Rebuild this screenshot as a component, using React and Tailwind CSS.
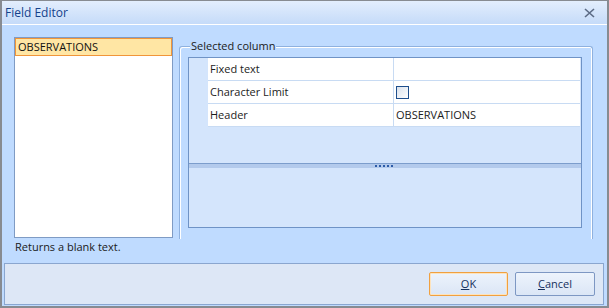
import React from 'react'

const rows = [
  { name: 'Fixed text', value: '' },
  { name: 'Character Limit', value: 'checkbox' },
  { name: 'Header', value: 'OBSERVATIONS' },
]

function CloseIcon() {
  return (
    <svg width="11" height="10" viewBox="0 0 11 10" className="text-[#5c6b85]">
      <path d="M1 1l9 8M10 1l-9 8" stroke="currentColor" strokeWidth="1.6" fill="none" />
    </svg>
  )
}

function PropertyGrid() {
  return (
    <div className="ml-[8px] mt-[10px] w-[394px] h-[171px] border border-[#6f93c6] bg-[#d4e5fc] flex flex-col">
      <div className="flex flex-col">
        {rows.map((r) => (
          <div key={r.name} className="flex h-[23px]">
            <div className="w-[19px] shrink-0" />
            <div className="flex flex-1 bg-white border-b border-[#c8dbf3] mr-[1px]">
              <div className="w-[186px] border-r border-[#c8dbf3] pl-[2px] pt-[1px] flex items-center text-[#1c1c1c]">
                {r.name}
              </div>
              <div className="flex-1 pl-[2px] pt-[1px] flex items-center text-[#1c1c1c]">
                {r.value === 'checkbox' ? (
                  <span className="block w-[13px] h-[13px] border border-[#1e4e8c] bg-gradient-to-br from-[#d9e1ec] to-white" />
                ) : (
                  r.value
                )}
              </div>
            </div>
          </div>
        ))}
      </div>
      <div className="h-[36px]" />
      {/* splitter */}
      <div className="border-t border-[#7c9dcc] h-[5px] bg-[#b3caec] flex justify-end pr-[188px]">
        <div className="flex gap-[2px] mt-[1px]">
          {[0, 1, 2, 3, 4].map((i) => (
            <span key={i} className="block w-[2px] h-[2px] bg-[#2d5ca8]" />
          ))}
        </div>
      </div>
      <div className="flex-1" />
    </div>
  )
}

export default function App() {
  return (
    <div className="w-[609px] h-[308px] bg-[#bfdbff] border-t border-x-2 border-b-2 border-[#878b91] flex flex-col font-['Open_Sans',sans-serif] text-[11px] text-black overflow-hidden">
      {/* title bar */}
      <div className="h-[24px] shrink-0 bg-gradient-to-b from-[#e3eefd] to-[#c5dbf9] border-b border-white flex items-center justify-between pl-[3px] pr-[12px]">
        <span className="text-[#15428b] text-[12px]">Field Editor</span>
        <CloseIcon />
      </div>

      <div className="flex-1 flex flex-col">
        <div className="flex pl-[12px] pt-[12px]">
          {/* list */}
          <div className="w-[159px] h-[201px] bg-white border border-[#7f9bc4]">
            <div className="h-[18px] bg-[#ffe6a4] border border-[#f0953a] flex items-center pl-[2px] text-[#111]">
              OBSERVATIONS
            </div>
          </div>

          {/* group box */}
          <div className="relative ml-[6px] mt-[9px] w-[414px] h-[193px] border-t border-x border-[#8fb1df] rounded-t-[3px] shadow-[inset_1px_1px_0_#ffffff,inset_-1px_0_0_#ffffff]">
            <span className="absolute left-[10px] top-[-9px] bg-[#bfdbff] px-[1px] text-[#1a1a1a] leading-[16px]">
              Selected column
            </span>
            <PropertyGrid />
          </div>
        </div>

        <div className="pl-[13px] mt-[-1px] h-[18px] flex items-center text-[#1a1a1a]">
          Returns a blank text.
        </div>

        {/* button bar */}
        <div className="mt-[7px] ml-[2px] mr-[3px] h-[42px] bg-[#dde7f6] border border-[#8aa6cf] flex items-start justify-end gap-[7px] pt-[8px] pr-[8px]">
          <button className="w-[79px] h-[24px] rounded-[2px] border border-[#f0a040] bg-gradient-to-b from-[#edf3fc] to-[#dbe6f6] text-[#15305e] shadow-[inset_0_0_0_1px_#fde3bd]">
            <span className="underline">O</span>K
          </button>
          <button className="w-[80px] h-[24px] rounded-[2px] border border-[#7d97c3] bg-gradient-to-b from-[#edf3fc] to-[#dbe6f6] text-[#15305e]">
            <span className="underline">C</span>ancel
          </button>
        </div>
      </div>
    </div>
  )
}
